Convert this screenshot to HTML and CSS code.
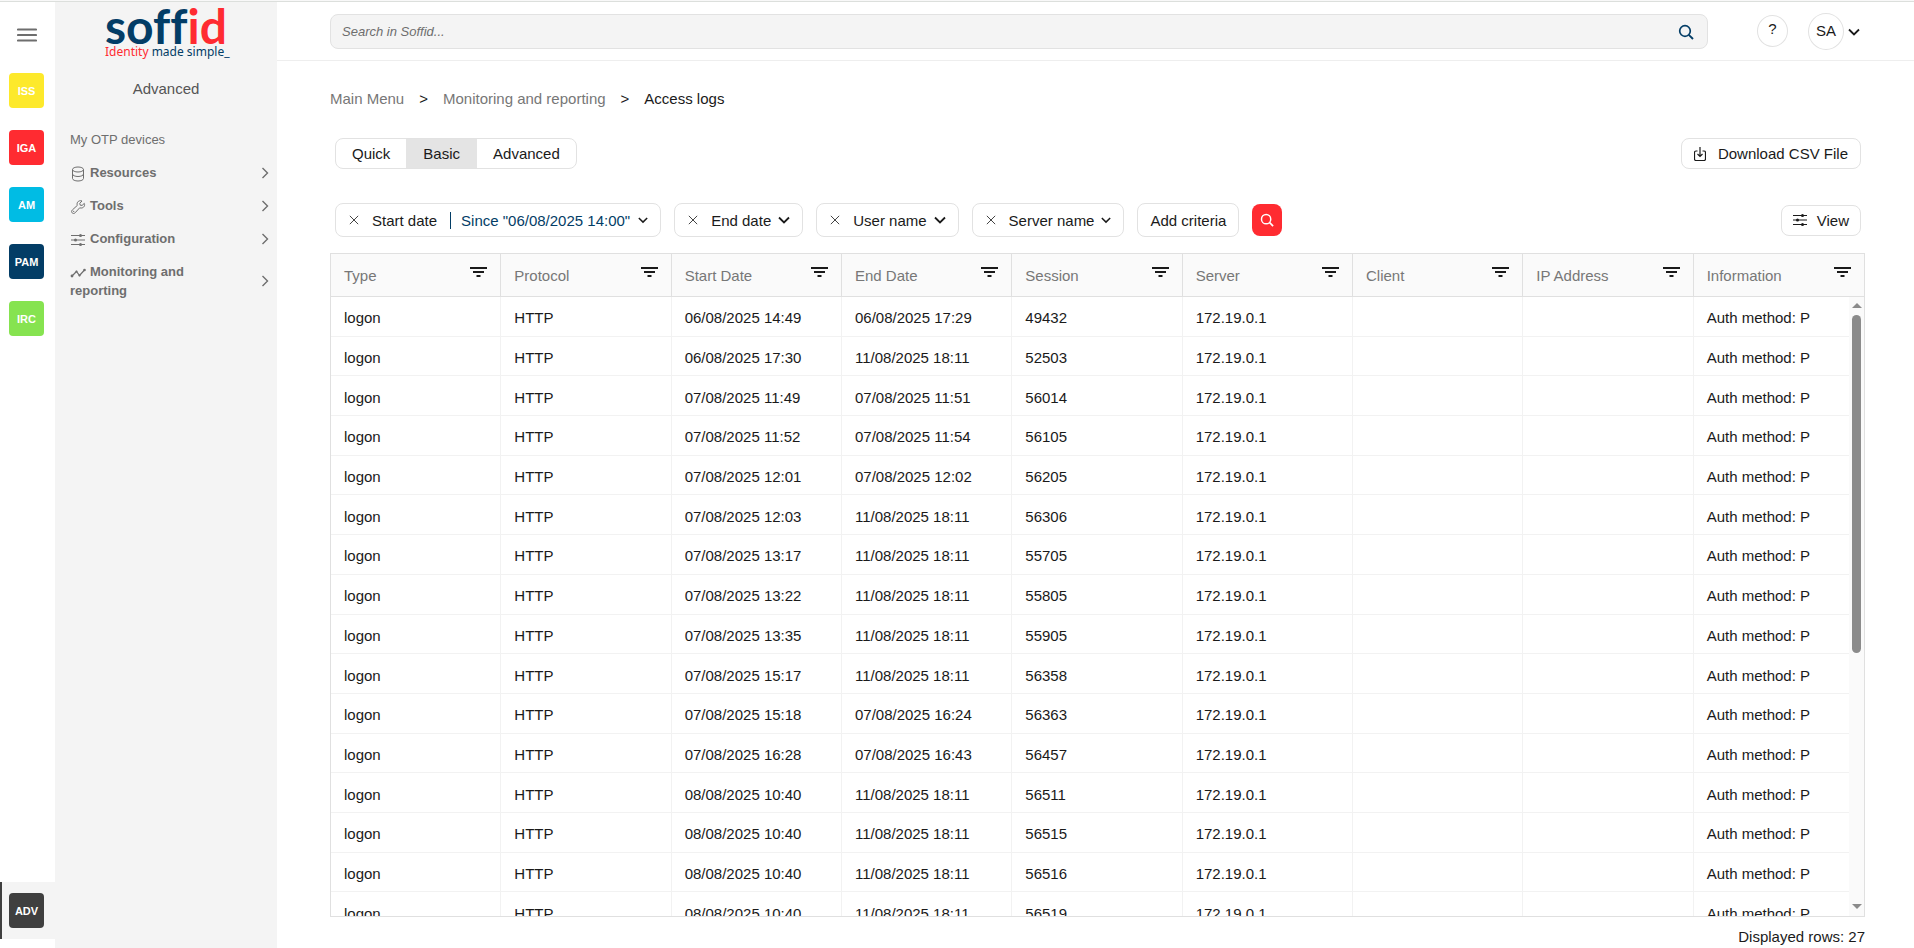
FILE: index.html
```html
<!DOCTYPE html>
<html lang="en">
<head>
    <meta charset="UTF-8">
    <meta name="viewport" content="width=device-width, initial-scale=1.0">
    <title>Access logs</title>
    <link rel="stylesheet" href="styles.css">
</head>
<body>
    <!-- shared icons -->
    <svg class="sprite" aria-hidden="true">
        <symbol id="chevron" viewBox="0 0 12 8"><path d="M1 1.5l5 5 5-5" fill="none" stroke="currentColor" stroke-width="1.8"/></symbol>
        <symbol id="chevron-right" viewBox="0 0 8 12"><path d="M1.5 1l5 5-5 5" fill="none" stroke="currentColor" stroke-width="1.4"/></symbol>
        <symbol id="cross" viewBox="0 0 12 12"><path d="M1 1l10 10M11 1L1 11" fill="none" stroke="#444" stroke-width="1.2"/></symbol>
        <symbol id="search" viewBox="0 0 16 16"><circle cx="7" cy="7" r="5.3" fill="none" stroke="currentColor" stroke-width="1.7"/><path d="M10.8 10.8L15 15" stroke="currentColor" stroke-width="1.9"/></symbol>
        <symbol id="sliders" viewBox="0 0 14 12"><path d="M0 1.500h14M0 6h14M0 10.500h14" stroke="currentColor" stroke-width="1.1"/><circle cx="9.500" cy="1.600" r="1.500" fill="currentColor"/><circle cx="4.500" cy="6" r="1.500" fill="currentColor"/><circle cx="9.500" cy="10.400" r="1.500" fill="currentColor"/></symbol>
        <symbol id="filter" viewBox="0 0 17 10"><path d="M0 1h17M3 5h11M6.500 9h4" stroke="currentColor" stroke-width="1.800"/></symbol>
    </svg>

    <nav class="rail">
        <button class="burger" aria-label="Menu">
            <svg width="20" height="14" viewBox="0 0 20 14"><path d="M1 1.500h18M1 7h18M1 12.500h18" stroke="#6e6e6e" stroke-width="2.200" stroke-linecap="round"/></svg>
        </button>
        <a href="#" class="module"><span class="tile iss">ISS</span></a>
        <a href="#" class="module"><span class="tile iga">IGA</span></a>
        <a href="#" class="module"><span class="tile am">AM</span></a>
        <a href="#" class="module"><span class="tile pam">PAM</span></a>
        <a href="#" class="module"><span class="tile irc">IRC</span></a>
        <a href="#" class="module active"><span class="tile adv">ADV</span></a>
    </nav>

    <aside class="sidebar">
        <a href="#" class="logo" aria-label="Soffid">
            <svg width="124" height="58" viewBox="0 0 124 58">
                <text class="logo-name" x="1" y="43">soff<tspan class="red">id</tspan></text>
                <text class="logo-tag" x="1" y="55"><tspan class="red">Identity</tspan> made simple_</text>
            </svg>
        </a>
        <h2>Advanced</h2>
        <ul class="menu">
            <li><a href="#" class="plain">My OTP devices</a></li>
            <li><a href="#"><span><svg width="16" height="16" viewBox="0 0 16 16"><g fill="none" stroke="currentColor"><ellipse cx="8" cy="3.500" rx="5.500" ry="2.500"/><path d="M2.500 3.500v9c0 1.400 2.500 2.500 5.500 2.500s5.500-1.100 5.500-2.500v-9M2.500 8c0 1.400 2.500 2.500 5.500 2.500s5.500-1.100 5.500-2.500"/></g></svg>Resources</span><svg class="arrow"><use href="#chevron-right"/></svg></a></li>
            <li><a href="#"><span><svg width="16" height="16" viewBox="0 0 16 16"><path d="M14.300 4.400l-2.200 2-1.900-.2-.4-1.900 2.200-2.300c-1.800-.7-3.600-.1-4.400 1.200-.6 1-.7 2.200-.3 3.200L2.300 11c-.9.900-.9 2.100-.1 2.900.8.800 2 .8 2.900-.1l4.600-5c1.400.5 2.900.2 3.900-.7 1-1 1.300-2.300.7-3.700z" fill="none" stroke="currentColor"/><circle cx="3.700" cy="12.400" r=".6" fill="currentColor"/></svg>Tools</span><svg class="arrow"><use href="#chevron-right"/></svg></a></li>
            <li><a href="#"><span><svg width="16" height="12"><use href="#sliders"/></svg>Configuration</span><svg class="arrow"><use href="#chevron-right"/></svg></a></li>
            <li><a href="#"><span><svg width="16" height="12" viewBox="0 0 16 12"><path d="M2 9l4.500-4.500 3 4L14.500 3" fill="none" stroke="currentColor" stroke-width="1.200"/><circle cx="2" cy="9" r="1.400" fill="currentColor"/><circle cx="6.500" cy="4.500" r="1.100" fill="currentColor"/><circle cx="9.500" cy="8.500" r="1.100" fill="currentColor"/><circle cx="14.500" cy="3" r="1.300" fill="currentColor"/></svg>Monitoring and reporting</span><svg class="arrow"><use href="#chevron-right"/></svg></a></li>
        </ul>
    </aside>

    <div class="page">
        <header class="topbar">
            <form class="search">
                <input type="text" placeholder="Search in Soffid..." aria-label="Search in Soffid">
                <button type="button" aria-label="Search"><svg width="16" height="16"><use href="#search"/></svg></button>
            </form>
            <button class="help">?</button>
            <button class="user"><span>SA</span><svg width="12" height="8"><use href="#chevron"/></svg></button>
        </header>

        <main>
            <div class="breadcrumb">
                <a href="#">Main Menu</a><span>&gt;</span><a href="#">Monitoring and reporting</a><span>&gt;</span><b>Access logs</b>
            </div>

            <div class="bar modes">
                <div class="tabs">
                    <button>Quick</button>
                    <button class="selected">Basic</button>
                    <button>Advanced</button>
                </div>
                <button class="btn download"><svg width="12" height="14" viewBox="0 0 12 14"><path d="M3.500 4H2a1.500 1.500 0 0 0-1.500 1.500V12A1.500 1.500 0 0 0 2 13.500h8a1.500 1.500 0 0 0 1.500-1.500V5.500A1.500 1.500 0 0 0 10 4H8.500M6 0v9.500M3.500 7L6 9.500 8.500 7" fill="none" stroke="currentColor" stroke-width="1.200"/></svg>Download CSV File</button>
            </div>

            <div class="bar criteria">
                <div class="chips">
                    <div class="chip">
                        <button class="remove" aria-label="Remove"><svg width="12" height="12"><use href="#cross"/></svg></button>
                        <span>Start date</span>
                        <button class="value">Since "06/08/2025 14:00"<svg width="10" height="8"><use href="#chevron"/></svg></button>
                    </div>
                    <div class="chip">
                        <button class="remove" aria-label="Remove"><svg width="12" height="12"><use href="#cross"/></svg></button>
                        <button class="pick">End date<svg width="12" height="8"><use href="#chevron"/></svg></button>
                    </div>
                    <div class="chip">
                        <button class="remove" aria-label="Remove"><svg width="12" height="12"><use href="#cross"/></svg></button>
                        <button class="pick">User name<svg width="12" height="8"><use href="#chevron"/></svg></button>
                    </div>
                    <div class="chip">
                        <button class="remove" aria-label="Remove"><svg width="12" height="12"><use href="#cross"/></svg></button>
                        <button class="pick">Server name<svg width="10" height="8"><use href="#chevron"/></svg></button>
                    </div>
                    <button class="chip add">Add criteria</button>
                    <button class="go" aria-label="Search"><svg width="14" height="14"><use href="#search"/></svg></button>
                </div>
                <button class="btn"><svg width="14" height="12"><use href="#sliders"/></svg>View</button>
            </div>

            <div class="grid">
                <table>
                    <thead><tr id="head"></tr></thead>
                    <tbody id="rows"></tbody>
                </table>
                <div class="scrollbar"><i class="up"></i><div class="track"><div class="thumb"></div></div><i class="down"></i></div>
            </div>
            <div class="count">Displayed rows: 27</div>
        </main>
    </div>

<script>
    const columns = ["Type", "Protocol", "Start Date", "End Date", "Session", "Server", "Client", "IP Address", "Information"];
    const logs = [
        ["06/08/2025 14:49", "06/08/2025 17:29", "49432"],
        ["06/08/2025 17:30", "11/08/2025 18:11", "52503"],
        ["07/08/2025 11:49", "07/08/2025 11:51", "56014"],
        ["07/08/2025 11:52", "07/08/2025 11:54", "56105"],
        ["07/08/2025 12:01", "07/08/2025 12:02", "56205"],
        ["07/08/2025 12:03", "11/08/2025 18:11", "56306"],
        ["07/08/2025 13:17", "11/08/2025 18:11", "55705"],
        ["07/08/2025 13:22", "11/08/2025 18:11", "55805"],
        ["07/08/2025 13:35", "11/08/2025 18:11", "55905"],
        ["07/08/2025 15:17", "11/08/2025 18:11", "56358"],
        ["07/08/2025 15:18", "07/08/2025 16:24", "56363"],
        ["07/08/2025 16:28", "07/08/2025 16:43", "56457"],
        ["08/08/2025 10:40", "11/08/2025 18:11", "56511"],
        ["08/08/2025 10:40", "11/08/2025 18:11", "56515"],
        ["08/08/2025 10:40", "11/08/2025 18:11", "56516"],
        ["08/08/2025 10:40", "11/08/2025 18:11", "56519"]
    ];

    document.getElementById("head").innerHTML = columns.map(name =>
        `<th><div>${name}<button aria-label="Filter ${name}"><svg width="17" height="10"><use href="#filter"/></svg></button></div></th>`
    ).join("");

    document.getElementById("rows").innerHTML = logs.map(([start, end, session]) => {
        const cells = ["logon", "HTTP", start, end, session, "172.19.0.1", "", "", "Auth method: P"];
        return `<tr>${cells.map(c => `<td>${c}</td>`).join("")}</tr>`;
    }).join("");
</script>
</body>
</html>
```
FILE: styles.css
```css
* {
    box-sizing: border-box;
}
body {
    margin: 0;
    height: 100vh;
    display: flex;
    overflow: hidden;
    border-top: 1px solid #f8f8f8;
    font-family: "Liberation Sans", Arial, sans-serif;
    font-size: 15px;
    color: #1a1a1a;
    background: white;
}
body::before {
    content: "";
    position: absolute;
    top: 1px;
    left: 0;
    right: 0;
    height: 1px;
    background: #dcdfdc;
}
button, input {
    font: inherit;
    color: inherit;
}
button {
    background: none;
    border: none;
    padding: 0;
    cursor: pointer;
}
a {
    color: inherit;
    text-decoration: none;
}
svg {
    display: block;
    flex: none;
}
.sprite {
    position: absolute;
    width: 0;
    height: 0;
}

/* module rail */
.rail {
    width: 55px;
    display: flex;
    flex-direction: column;
    padding-bottom: 9px;
}
.burger {
    height: 61px;
    padding: 6px 0 0 17px;
}
.module {
    height: 57px;
    padding: 11px 9px;
}
.tile {
    display: flex;
    align-items: center;
    justify-content: center;
    width: 35px;
    height: 35px;
    border-radius: 4px;
    color: white;
    font-size: 11px;
    font-weight: bold;
}
.iss { background: #fde92b; }
.iga { background: #ff2b31; }
.am { background: #00bce4; }
.pam { background: #033d66; }
.irc { background: #86e350; }
.adv { background: #3f3f3f; }
.module.active {
    margin-top: auto;
    padding-left: 7px;
    border-left: 2px solid #3f3f3f;
    background: #f4f4f4;
}

/* sidebar */
.sidebar {
    width: 222px;
    background: #f4f4f4;
    color: #6e6e6e;
}
.logo {
    display: flex;
    justify-content: center;
}
.logo svg {
    overflow: visible;
}
.logo-name {
    font-family: Lato, sans-serif;
    font-size: 48px;
    font-weight: bold;
    font-variant-ligatures: none;
    fill: #033d66;
}
.logo-tag {
    font-family: "Noto Sans", sans-serif;
    font-size: 12px;
    fill: #033d66;
}
.logo .red {
    fill: #ff2b31;
}
.sidebar h2 {
    margin: 20px 0 31px;
    font-size: 15px;
    line-height: 20px;
    font-weight: normal;
    text-align: center;
    color: #555;
}
.menu {
    margin: 0;
    padding: 0 8px 0 15px;
    list-style: none;
    font-size: 13px;
    font-weight: bold;
    line-height: 19px;
}
.menu a {
    display: flex;
    align-items: center;
    justify-content: space-between;
    padding: 0 0 14px;
}
.menu a.plain {
    font-weight: normal;
}
.menu span {
    max-width: 140px;
}
.menu span svg {
    display: inline-block;
    vertical-align: middle;
    margin-right: 4px;
}
.menu .arrow {
    width: 8px;
    height: 12px;
}

/* top bar */
.page {
    flex: 1;
    min-width: 0;
    display: flex;
    flex-direction: column;
}
.topbar {
    display: flex;
    align-items: center;
    height: 60px;
    padding: 4px 54px 0 53px;
    border-bottom: 1px solid #eee;
}
.search {
    flex: 1;
    display: flex;
    align-items: center;
    height: 35px;
    margin: 0 49px 2px 0;
    padding-right: 13px;
    background: #f4f4f4;
    border: 1px solid #e2e2e2;
    border-radius: 8px;
    color: #033d66;
}
.search input {
    flex: 1;
    padding: 0 11px;
    border: none;
    background: none;
    outline: none;
    font-size: 13px;
    font-style: italic;
}
.search input::placeholder {
    color: #6e6e6e;
}
.help {
    width: 31px;
    height: 32px;
    margin: 0 20px 4px 0;
    padding-bottom: 4px;
    border: 1px solid #e2e2e2;
    border-radius: 50%;
}
.user {
    display: flex;
    align-items: center;
    gap: 4px;
    margin-bottom: 2px;
}
.user span {
    width: 36px;
    height: 37px;
    line-height: 33px;
    border: 1px solid #e2e2e2;
    border-radius: 50%;
}

/* content */
main {
    flex: 1;
    min-height: 0;
    display: flex;
    flex-direction: column;
    padding: 28px 49px 0 53px;
}
.breadcrumb {
    display: flex;
    gap: 15px;
    line-height: 20px;
    color: #777;
}
.breadcrumb span, .breadcrumb b {
    color: #1a1a1a;
    font-weight: normal;
}
.bar {
    display: flex;
    align-items: center;
    justify-content: space-between;
    padding: 0 4px 0 5px;
}
.modes {
    margin: 29px 0 34px;
}
.criteria {
    margin-bottom: 16px;
}
.tabs, .btn, .chip {
    border: 1px solid #e2e2e2;
    border-radius: 8px;
}
.tabs {
    display: flex;
    height: 31px;
    overflow: hidden;
}
.tabs button {
    padding: 0 16px;
}
.tabs .selected {
    padding: 0 17px;
    background: #e4e4e4;
}
.btn {
    display: flex;
    align-items: center;
    gap: 10px;
    height: 31px;
    padding: 0 11px;
}
.download {
    gap: 12px;
    padding: 0 12px;
}
.chips {
    display: flex;
    align-items: center;
    gap: 13px;
}
.chip {
    display: flex;
    align-items: center;
    gap: 12px;
    height: 34px;
    padding: 0 12px;
}
.remove svg {
    padding: 1px;
}
.pick {
    display: flex;
    align-items: center;
    gap: 7px;
}
.value {
    display: flex;
    align-items: center;
    gap: 8px;
    height: 17px;
    margin-left: 1px;
    padding-left: 10px;
    border-left: 1px solid #033d66;
    color: #033d66;
}
.value svg {
    color: #1a1a1a;
}
.go {
    display: flex;
    align-items: center;
    justify-content: center;
    width: 30px;
    height: 32px;
    border-radius: 8px;
    color: white;
    background: #ff2b31;
}

/* log table */
.grid {
    position: relative;
    flex: 1;
    min-height: 0;
    overflow: hidden;
    border: 1px solid #e0e0e0;
}
table {
    width: 100%;
    height: 678px;
    table-layout: fixed;
    border-collapse: separate;
    border-spacing: 0;
}
th {
    height: 43px;
    padding: 0 13px;
    background: #fafafa;
    border-right: 1px solid #e0e0e0;
    border-bottom: 1px solid #e0e0e0;
    color: #777;
    font-weight: normal;
    text-align: left;
}
th div {
    display: flex;
    align-items: center;
    justify-content: space-between;
}
th button {
    color: #1a1a1a;
    padding-bottom: 6px;
}
td {
    padding: 3px 13px 0;
    border-right: 1px solid #f2f2f2;
    border-bottom: 1px solid #f2f2f2;
    white-space: nowrap;
}
th:last-child, td:last-child {
    border-right: none;
}
.scrollbar {
    position: absolute;
    top: 43px;
    right: 0;
    bottom: 0;
    width: 15px;
    display: flex;
    flex-direction: column;
    align-items: center;
    padding: 6px 0 7px;
    background: #fafafa;
}
.scrollbar i {
    border: 5px solid transparent;
}
.scrollbar .up {
    border-top: none;
    border-bottom-color: #8b8b8b;
}
.scrollbar .down {
    border-bottom: none;
    border-top-color: #8b8b8b;
}
.track {
    flex: 1;
    margin: 7px 0;
}
.thumb {
    width: 9px;
    height: 58%;
    border-radius: 5px;
    background: #8b8b8b;
}
.count {
    height: 31px;
    line-height: 40px;
    text-align: right;
}
```
